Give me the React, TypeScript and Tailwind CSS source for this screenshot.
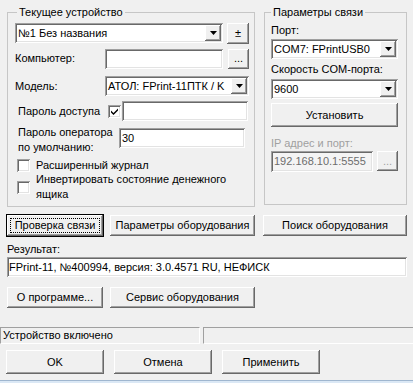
import React from "react";

const raised =
  "shadow-[inset_-1px_-1px_0_#696969,inset_1px_1px_0_#ffffff,inset_-2px_-2px_0_#a0a0a0,inset_2px_2px_0_#f0f0f0]";
const sunken =
  "shadow-[inset_1px_1px_0_#a0a0a0,inset_-1px_-1px_0_#ffffff,inset_2px_2px_0_#696969,inset_-2px_-2px_0_#e3e3e3]";

function Btn({
  className = "",
  children,
  focus = false,
  disabled = false,
}: {
  className?: string;
  children: React.ReactNode;
  focus?: boolean;
  disabled?: boolean;
}) {
  return (
    <div
      className={`relative flex shrink-0 items-center justify-center bg-[#f0f0f0] ${raised} ${
        focus ? "outline outline-1 outline-black" : ""
      } ${disabled ? "text-[#a0a0a0]" : "text-black"} ${className}`}
    >
      {focus && <div className="absolute inset-[3px] border border-dotted border-black" />}
      <span className="leading-[13px]">{children}</span>
    </div>
  );
}

function Arrow() {
  return (
    <div className={`flex w-[16px] shrink-0 items-center justify-center bg-[#f0f0f0] ${raised}`}>
      <svg width="7" height="4" viewBox="0 0 7 4">
        <polygon points="0,0 7,0 3.5,4" fill="#000" />
      </svg>
    </div>
  );
}

function Combo({ className = "", text }: { className?: string; text: string }) {
  return (
    <div className={`flex shrink-0 bg-white p-[2px] ${sunken} ${className}`}>
      <span className="flex-1 overflow-hidden whitespace-nowrap pl-[1px] leading-[16px]">{text}</span>
      <Arrow />
    </div>
  );
}

function Edit({
  className = "",
  text = "",
  disabled = false,
}: {
  className?: string;
  text?: string;
  disabled?: boolean;
}) {
  return (
    <div
      className={`flex shrink-0 items-center overflow-hidden whitespace-nowrap pl-[3px] ${sunken} ${
        disabled ? "bg-[#f4f4f4] text-[#6d6d6d]" : "bg-white text-black"
      } ${className}`}
    >
      <span className="leading-[13px]">{text}</span>
    </div>
  );
}

function Check({ checked = false }: { checked?: boolean }) {
  return (
    <div className={`flex h-[13px] w-[13px] shrink-0 items-center justify-center bg-white ${sunken}`}>
      {checked && (
        <svg width="7" height="7" viewBox="0 0 7 7">
          <path d="M0 2.5 L2.5 5 L7 0.5 L7 2.5 L2.5 7 L0 4.5 Z" fill="#000" />
        </svg>
      )}
    </div>
  );
}

export default function App() {
  return (
    <div className="relative flex h-[383px] w-[413px] flex-col overflow-hidden bg-[#f0f0f0] font-['Liberation_Sans',Arial,sans-serif] text-[11px] text-black">
      {/* top groups */}
      <div className="flex pt-[5px]">
        <fieldset className="ml-[7px] h-[202px] w-[248px] shrink-0 border border-[#c6c6c6]">
          <legend className="ml-[9px] px-[2px] leading-[14px]">Текущее устройство</legend>
          <div className="flex flex-col pl-[7px]">
            <div className="mt-[4px] flex items-start">
              <Combo className="h-[20px] w-[208px]" text="№1 Без названия" />
              <Btn className="ml-[4px] h-[21px] w-[22px]">±</Btn>
            </div>
            <div className="mt-[4px] flex h-[21px] items-center">
              <span className="w-[90px] leading-[13px]">Компьютер:</span>
              <Edit className="h-[20px] w-[118px]" />
              <Btn className="ml-[5px] h-[20px] w-[21px]">...</Btn>
            </div>
            <div className="mt-[7px] flex h-[20px] items-center">
              <span className="w-[90px] leading-[13px]">Модель:</span>
              <Combo className="h-[20px] w-[144px]" text="АТОЛ: FPrint-11ПТК / K" />
            </div>
            <div className="mt-[5px] flex h-[20px] items-center pl-[3px]">
              <span className="w-[90px] leading-[13px]">Пароль доступа</span>
              <Check checked />
              <Edit className="ml-[1px] h-[20px] w-[126px]" />
            </div>
            <div className="mt-[7px] flex h-[20px] items-start pl-[3px]">
              <span className="-mt-[3px] w-[101px] leading-[15px]">
                Пароль оператора
                <br />
                по умолчанию:
              </span>
              <Edit className="h-[20px] w-[126px]" text="30" />
            </div>
            <div className="mt-[11px] flex items-center pl-[2px]">
              <Check />
              <span className="ml-[6px] leading-[13px]">Расширенный журнал</span>
            </div>
            <div className="flex items-center pl-[2px]">
              <Check />
              <span className="ml-[6px] leading-[15px]">
                Инвертировать состояние денежного
                <br />
                ящика
              </span>
            </div>
          </div>
        </fieldset>

        <fieldset className="ml-[9px] h-[200px] w-[143px] shrink-0 border border-[#c6c6c6]">
          <legend className="ml-[6px] px-[2px] leading-[14px]">Параметры связи</legend>
          <div className="flex flex-col pl-[6px]">
            <span className="mt-[5px] leading-[13px]">Порт:</span>
            <Combo className="mt-[2px] h-[20px] w-[127px]" text="COM7: FPrintUSB0" />
            <span className="mt-[4px] leading-[13px]">Скорость COM-порта:</span>
            <Combo className="mt-[3px] h-[20px] w-[127px]" text="9600" />
            <Btn className="mt-[4px] h-[24px] w-[127px]">Установить</Btn>
            <span className="mt-[10px] leading-[13px] text-[#a0a0a0]">IP адрес и порт:</span>
            <div className="mt-[1px] flex items-start">
              <Edit className="h-[21px] w-[102px]" text="192.168.10.1:5555" disabled />
              <Btn className="ml-[4px] h-[20px] w-[21px]" disabled>
                ...
              </Btn>
            </div>
          </div>
        </fieldset>
      </div>

      {/* action buttons */}
      <div className="mt-[8px] flex pl-[7px]">
        <Btn className="h-[21px] w-[96px]" focus>
          Проверка связи
        </Btn>
        <Btn className="ml-[7px] h-[21px] w-[145px]">Параметры оборудования</Btn>
        <Btn className="ml-[8px] h-[21px] w-[144px]">Поиск оборудования</Btn>
      </div>

      <span className="mt-[7px] pl-[7px] leading-[13px]">Результат:</span>
      <Edit
        className="ml-[7px] mt-[1px] h-[20px] w-[400px] !pl-[2px]"
        text="FPrint-11, №400994, версия: 3.0.4571 RU, НЕФИСК"
      />

      <div className="mt-[10px] flex pl-[7px]">
        <Btn className="h-[21px] w-[96px]">О программе...</Btn>
        <Btn className="ml-[7px] h-[21px] w-[145px]">Сервис оборудования</Btn>
      </div>

      {/* status bar */}
      <div className="mt-[19px] flex h-[17px]">
        <div className="flex w-[200px] items-center border-b border-l border-r border-t border-b-white border-l-[#a0a0a0] border-r-white border-t-[#a0a0a0] pl-[2px]">
          <span className="leading-[13px]">Устройство включено</span>
        </div>
        <div className="ml-[3px] flex-1 border-b border-l border-t border-b-white border-l-[#a0a0a0] border-t-[#a0a0a0]" />
      </div>

      {/* dialog buttons */}
      <div className="mt-[6px] flex pl-[6px]">
        <Btn className="h-[24px] w-[98px]">OK</Btn>
        <Btn className="ml-[10px] h-[24px] w-[98px]">Отмена</Btn>
        <Btn className="ml-[10px] h-[24px] w-[98px]">Применить</Btn>
      </div>

      <div className="mt-auto h-[3px] border-t border-[#9fb6cf] bg-[#dbe8f5]" />
    </div>
  );
}
